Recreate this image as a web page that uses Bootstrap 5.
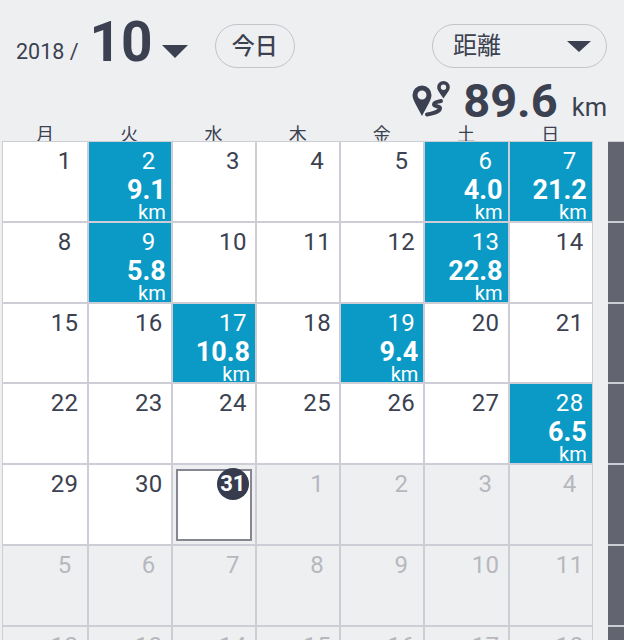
<!DOCTYPE html>
<html lang="ja">
  <head>
    <meta charset="UTF-8" />
    <meta name="viewport" content="width=device-width, initial-scale=1.0" />
    <title>カレンダー</title>
    <link href="https://cdn.jsdelivr.net/npm/bootstrap@5.3.0/dist/css/bootstrap.min.css" rel="stylesheet" />
    <style>
      html, body { height: 640px; overflow: hidden; }
      body {
        background-color: #eeeff1;
        color: #3b4150;
        font-family: Roboto, "Noto Sans CJK JP", sans-serif;
      }
      .top-bar { height: 80px; padding: 24px 17px 0 16px; }
      .year-text { font-size: 21.5px; line-height: 44px; margin-top: 6px; }
      .month-text { font-size: 55px; font-weight: 700; line-height: 44px; margin: -4px 9px 0 11px; }
      .tri { width: 0; height: 0; border-left: 13px solid transparent; border-right: 13px solid transparent; border-top: 13px solid #3b4150; }
      .tri-month { margin-top: 21px; }
      .tri-select { border-left-width: 12px; border-right-width: 12px; border-top-width: 11px; }
      .pill-btn {
        height: 44px;
        border: 1.5px solid #c3c4ca;
        border-radius: 22px;
        font-size: 24px;
        line-height: 1;
        color: #3b4150;
      }
      .today-btn { width: 80px; margin-left: 27px; font-size: 23px; font-weight: 500; }
      .select-btn { width: 175px; padding: 0 15px 0 20px; }
      .total-row { height: 45px; padding-right: 17px; }
      .total-value { font-size: 47px; font-weight: 700; line-height: 45px; margin: -2px 14px 0 13px; }
      .total-unit { font-size: 25.5px; line-height: 24px; margin-top: 15px; }
      .week-row { height: 16px; overflow: hidden; padding-left: 3px; width: 640px; }
      .week-row > div { width: 84.2px; flex: none; text-align: center; font-size: 18px; line-height: 20px; }
      .cal-wrap { padding-left: 2px; }
      .cal-grid {
        display: grid;
        grid-template-columns: 83.6px repeat(6, 82.2px);
        grid-auto-rows: 78.8px;
        gap: 2px;
        padding: 1px;
        background-color: #cdced5;
        flex: none;
      }
      .day {
        position: relative;
        background-color: #fff;
        padding-top: 5px;
        font-size: 24px;
        line-height: 28px;
        letter-spacing: .4px;
        overflow: hidden;
      }
      .day-num { display: block; width: 44px; margin-left: auto; text-align: center; }
      .day.ride { background-color: #0b9ac6; color: #fff; }
      .day.off { background-color: #eeeff1; color: #b6b8be; }
      .ride-val { font-size: 27px; font-weight: 700; line-height: 28px; margin: 1px 5px 0 0; text-align: right; letter-spacing: 0; }
      .ride-unit { font-size: 20px; line-height: 17px; margin-right: 5px; text-align: right; letter-spacing: 0; }
      .today-box {
        position: absolute;
        left: 3px;
        top: 4px;
        width: 76px;
        height: 72px;
        border: 2px solid #85868f;
      }
      .today-num {
        position: absolute;
        left: 39px;
        top: -3px;
        width: 32px;
        height: 32px;
        border-radius: 50%;
        background-color: #363c4e;
        color: #fff;
        font-size: 22px;
        font-weight: 700;
        line-height: 32px;
        text-align: center;
        letter-spacing: 0;
      }
      .side-panel { margin-left: 15px; width: 30px; flex: none; background-color: #cdced5; display: grid; grid-auto-rows: 78.8px; gap: 2px; padding-top: 1px; }
      .side-panel > div { background-color: #62646f; }
    </style>
  </head>
  <body>
    <div class="top-bar d-flex align-items-start">
      <div class="year-text">2018 /</div>
      <div class="month-text">10</div>
      <div class="tri tri-month"></div>
      <button type="button" class="btn p-0 pill-btn today-btn">今日</button>
      <button type="button" class="btn pill-btn select-btn d-flex align-items-center justify-content-between ms-auto">
        <span>距離</span><span class="tri tri-select"></span>
      </button>
    </div>

    <div class="total-row d-flex justify-content-end align-items-start">
      <svg width="38" height="38" viewBox="0 0 38 38" aria-hidden="true">
        <path fill="#3b4150" fill-rule="evenodd" d="M10 5.500a9.500 9.500 0 0 1 9.500 9.500c0 5-5 12-9.500 21C5.500 27 .5 20 .5 15A9.500 9.500 0 0 1 10 5.500zm0 5a4.500 4.500 0 1 0 0 9 4.500 4.500 0 0 0 0-9z" />
        <path fill="#3b4150" fill-rule="evenodd" d="M31.500 1a6.300 6.300 0 0 1 6.300 6.300c0 3.200-3.300 6.500-6.300 11.200-3-4.700-6.300-8-6.300-11.200A6.300 6.300 0 0 1 31.500 1zm0 3.600a2.700 2.700 0 1 0 0 5.400 2.700 2.700 0 0 0 0-5.400z" />
        <path fill="none" stroke="#3b4150" stroke-width="4" stroke-linecap="round" d="M29 21c-3 .5-7 1.500-7 3.500s6 1.500 6 3.500-3 5-13 6.500" />
      </svg>
      <div class="total-value">89.6</div>
      <div class="total-unit">km</div>
    </div>

    <div class="week-row d-flex">
      <div>月</div><div>火</div><div>水</div><div>木</div><div>金</div><div>土</div><div>日</div><div class="ms-2">月</div>
    </div>

    <div class="cal-wrap d-flex">
      <div class="cal-grid">
        <div class="day"><span class="day-num">1</span></div>
        <div class="day ride"><span class="day-num">2</span><div class="ride-val">9.1</div><div class="ride-unit">km</div></div>
        <div class="day"><span class="day-num">3</span></div>
        <div class="day"><span class="day-num">4</span></div>
        <div class="day"><span class="day-num">5</span></div>
        <div class="day ride"><span class="day-num">6</span><div class="ride-val">4.0</div><div class="ride-unit">km</div></div>
        <div class="day ride"><span class="day-num">7</span><div class="ride-val">21.2</div><div class="ride-unit">km</div></div>

        <div class="day"><span class="day-num">8</span></div>
        <div class="day ride"><span class="day-num">9</span><div class="ride-val">5.8</div><div class="ride-unit">km</div></div>
        <div class="day"><span class="day-num">10</span></div>
        <div class="day"><span class="day-num">11</span></div>
        <div class="day"><span class="day-num">12</span></div>
        <div class="day ride"><span class="day-num">13</span><div class="ride-val">22.8</div><div class="ride-unit">km</div></div>
        <div class="day"><span class="day-num">14</span></div>

        <div class="day"><span class="day-num">15</span></div>
        <div class="day"><span class="day-num">16</span></div>
        <div class="day ride"><span class="day-num">17</span><div class="ride-val">10.8</div><div class="ride-unit">km</div></div>
        <div class="day"><span class="day-num">18</span></div>
        <div class="day ride"><span class="day-num">19</span><div class="ride-val">9.4</div><div class="ride-unit">km</div></div>
        <div class="day"><span class="day-num">20</span></div>
        <div class="day"><span class="day-num">21</span></div>

        <div class="day"><span class="day-num">22</span></div>
        <div class="day"><span class="day-num">23</span></div>
        <div class="day"><span class="day-num">24</span></div>
        <div class="day"><span class="day-num">25</span></div>
        <div class="day"><span class="day-num">26</span></div>
        <div class="day"><span class="day-num">27</span></div>
        <div class="day ride"><span class="day-num">28</span><div class="ride-val">6.5</div><div class="ride-unit">km</div></div>

        <div class="day"><span class="day-num">29</span></div>
        <div class="day"><span class="day-num">30</span></div>
        <div class="day off"><div class="today-box bg-white"><div class="today-num">31</div></div></div>
        <div class="day off"><span class="day-num">1</span></div>
        <div class="day off"><span class="day-num">2</span></div>
        <div class="day off"><span class="day-num">3</span></div>
        <div class="day off"><span class="day-num">4</span></div>

        <div class="day off"><span class="day-num">5</span></div>
        <div class="day off"><span class="day-num">6</span></div>
        <div class="day off"><span class="day-num">7</span></div>
        <div class="day off"><span class="day-num">8</span></div>
        <div class="day off"><span class="day-num">9</span></div>
        <div class="day off"><span class="day-num">10</span></div>
        <div class="day off"><span class="day-num">11</span></div>

        <div class="day off"><span class="day-num">12</span></div>
        <div class="day off"><span class="day-num">13</span></div>
        <div class="day off"><span class="day-num">14</span></div>
        <div class="day off"><span class="day-num">15</span></div>
        <div class="day off"><span class="day-num">16</span></div>
        <div class="day off"><span class="day-num">17</span></div>
        <div class="day off"><span class="day-num">18</span></div>
      </div>
      <div class="side-panel">
        <div></div><div></div><div></div><div></div><div></div><div></div><div></div>
      </div>
    </div>

    <script src="https://cdn.jsdelivr.net/npm/bootstrap@5.3.0/dist/js/bootstrap.bundle.min.js"></script>
  </body>
</html>
